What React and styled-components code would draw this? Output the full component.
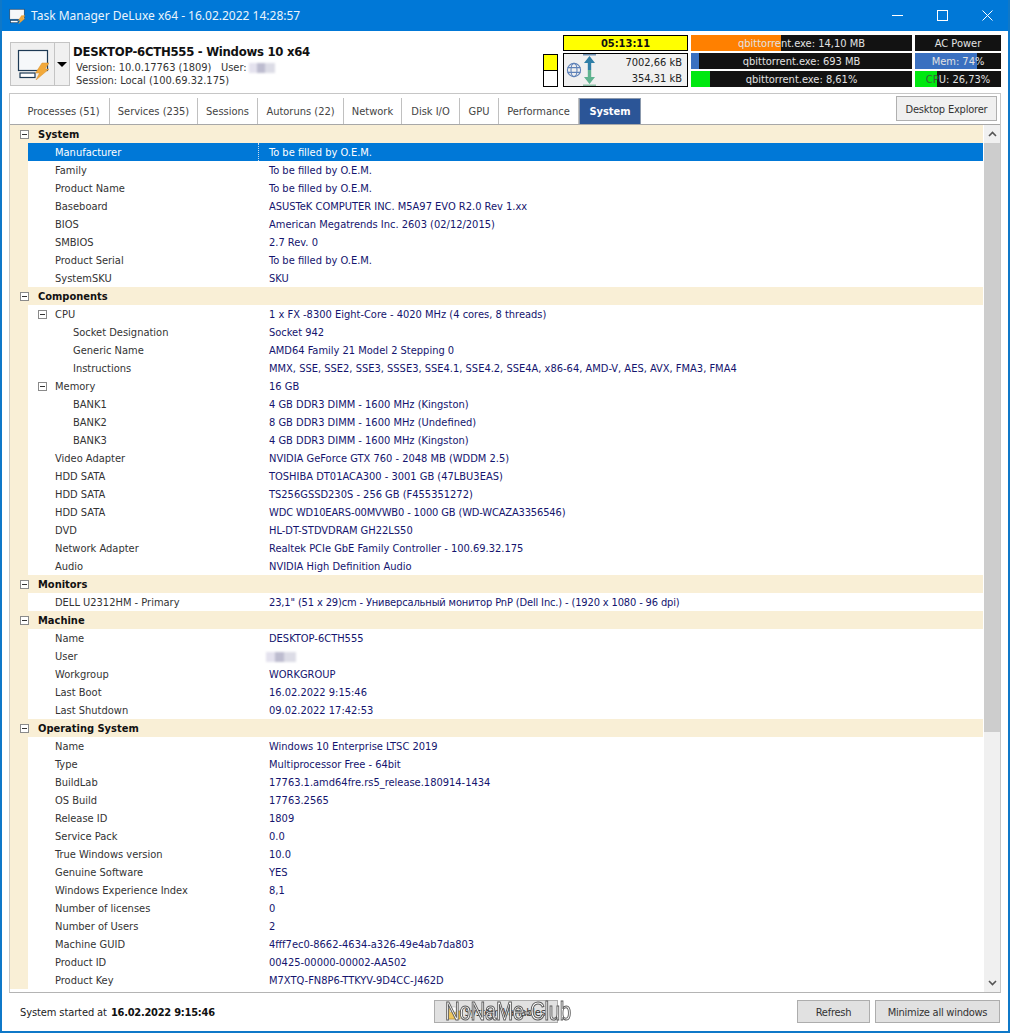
import React from "react";
import styled, { createGlobalStyle } from "styled-components";

const GlobalStyle = createGlobalStyle`
  html, body {
    margin: 0;
    padding: 0;
    background: #fff;
  }
  body {
    font-family: "DejaVu Sans", "Liberation Sans", sans-serif;
    font-stretch: condensed;
    font-size: 11px;
    color: #222;
  }
`;

const Window = styled.div`
  width: 1010px;
  height: 1033px;
  box-sizing: border-box;
  border: 2px solid #0f78c8;
  border-top: none;
  display: flex;
  flex-direction: column;
  overflow: hidden;
  background: #fff;
`;

const TitleBar = styled.div`
  height: 31px;
  margin: 0 -2px;
  flex: none;
  background: #0078d7;
  color: #eaf4fc;
  display: flex;
  align-items: center;
  padding-left: 9px;
`;

const TitleText = styled.span`
  font-family: "Noto Sans", sans-serif;
  font-stretch: normal;
  font-size: 12px;
  margin-left: 6px;
  flex: 1;
`;

const WinButton = styled.div`
  width: 45px;
  height: 31px;
  display: flex;
  align-items: center;
  justify-content: center;
`;

const Header = styled.div`
  height: 62px;
  flex: none;
  display: flex;
  padding: 0 7px 0 8px;
`;

const Machine = styled.div`
  display: flex;
  padding-top: 11px;
  flex: 1;
`;

const MachineButton = styled.div`
  width: 45px;
  height: 44px;
  box-sizing: border-box;
  background: #f0f0f0;
  border: 1px solid #c4c4c4;
  display: flex;
  align-items: center;
  justify-content: center;
`;

const MachineArrow = styled.div`
  width: 15px;
  height: 44px;
  box-sizing: border-box;
  background: #f0f0f0;
  border: 1px solid #c4c4c4;
  border-left: none;
  display: flex;
  align-items: center;
  justify-content: center;
  &::after {
    content: "";
    border-left: 5px solid transparent;
    border-right: 5px solid transparent;
    border-top: 5px solid #000;
  }
`;

const MachineInfo = styled.div`
  margin-left: 3px;
  line-height: 13px;
`;

const MachineName = styled.div`
  font-weight: bold;
  font-size: 13px;
  letter-spacing: -0.28px;
  color: #111;
  line-height: 18px;
  margin-top: 1px;
`;

const MachineLine = styled.div`
  margin-left: 3px;
  color: #333;
  display: flex;
  align-items: center;
`;

const BlurBox = styled.span`
  display: inline-block;
  width: ${(p) => p.$w}px;
  height: 10px;
  margin-left: ${(p) => p.$ml || 0}px;
  filter: blur(1px);
  background: linear-gradient(
    90deg,
    #e4e2ee 0 30%,
    #bdbccf 30% 60%,
    #dcdce6 60% 100%
  );
`;

const Meters = styled.div`
  display: grid;
  grid-template-columns: 20px 128px 224px 86px;
  grid-template-rows: 16px 16px 16px;
  row-gap: 2px;
  padding-top: 4px;
`;

const Clock = styled.div`
  grid-column: 2;
  margin-right: 3px;
  box-sizing: border-box;
  background: #ffff00;
  border: 1px solid #000;
  font-weight: bold;
  text-align: center;
  line-height: 15px;
  color: #111;
`;

const Swatches = styled.div`
  grid-column: 1;
  grid-row: 2 / span 2;
  margin: 1px 5px 0 0;
  border: 1px solid #000;
  display: flex;
  flex-direction: column;
`;

const Swatch = styled.div`
  flex: 1;
  background: ${(p) => p.$color};
  & + & {
    border-top: 1px solid #000;
  }
`;

const NetBox = styled.div`
  grid-column: 2;
  grid-row: 2 / span 2;
  margin-right: 3px;
  box-sizing: border-box;
  background: #f0f0f0;
  border: 1px solid #000;
  display: flex;
  align-items: center;
  padding: 0 5px 0 2px;
`;

const NetValues = styled.div`
  flex: 1;
  text-align: right;
  line-height: 16px;
  padding-top: 1px;
  color: #222;
`;

const Bar = styled.div`
  grid-column: ${(p) => p.$col};
  margin-right: ${(p) => (p.$col === 3 ? 3 : 0)}px;
  height: 16px;
  background: linear-gradient(
    90deg,
    ${(p) => p.$color} 0 ${(p) => p.$fill}px,
    #121212 ${(p) => p.$fill}px
  );
  color: #e2e2e2;
  text-align: center;
  line-height: 18px;
  white-space: nowrap;
`;

const DimText = styled.span`
  color: #3c5a3c;
`;

const Panel = styled.div`
  margin: 0 7px;
  height: 900px;
  flex: none;
  box-sizing: border-box;
  border: 1px solid #c6c6c6;
  border-bottom-color: #b4b4b4;
  display: flex;
  flex-direction: column;
`;

const TabStrip = styled.div`
  height: 31px;
  flex: none;
  box-sizing: border-box;
  border-bottom: 1px solid #a8a8a8;
  display: flex;
  align-items: flex-end;
`;

const Tab = styled.div`
  width: ${(p) => p.$w}px;
  height: 26px;
  box-sizing: border-box;
  padding-left: ${(p) => p.$pl || 0}px;
  display: flex;
  align-items: center;
  justify-content: center;
  color: ${(p) => (p.$active ? "#fff" : "#444")};
  font-weight: ${(p) => (p.$active ? "bold" : "normal")};
  background: ${(p) => (p.$active ? "#2b5597" : "transparent")};
  border-right: 1px solid ${(p) => (p.$active ? "#8b99ad" : "#c0c0c0")};
  border-left: ${(p) => (p.$active ? "1px solid #8b99ad" : "none")};
  border-top: ${(p) => (p.$active ? "1px solid #8b99ad" : "none")};
`;

const ExplorerButton = styled.div`
  margin-left: auto;
  margin-right: 3px;
  margin-bottom: 3px;
  width: 101px;
  height: 25px;
  box-sizing: border-box;
  padding-top: 2px;
  background: #f0f0f0;
  border: 1px solid #b0b0b0;
  display: flex;
  align-items: center;
  justify-content: center;
  color: #333;
  letter-spacing: -0.2px;
`;

const Body = styled.div`
  flex: 1;
  min-height: 0;
  display: flex;
`;

const Tree = styled.div`
  flex: 1;
  min-width: 0;
  padding-right: 1px;
`;

const Row = styled.div`
  height: 18px;
  display: flex;
  align-items: center;
  background: ${(p) => (p.$group ? "#f9efd6" : "transparent")};
`;

const Gutter = styled.div`
  width: 18px;
  height: 18px;
  flex: none;
  background: #f9efd6;
  display: flex;
  align-items: center;
  justify-content: flex-end;
`;

const RowInner = styled.div`
  flex: 1;
  height: 18px;
  display: flex;
  align-items: center;
  background: ${(p) => (p.$selected ? "#0078d7" : "transparent")};
`;

const NameCell = styled.div`
  width: 231px;
  box-sizing: border-box;
  height: 18px;
  padding: 1px 0 0 ${(p) => p.$pad}px;
  display: flex;
  align-items: center;
  color: ${(p) => (p.$selected ? "#fff" : p.$group ? "#111" : "#333")};
  border-right: ${(p) => (p.$selected ? "1px dotted #cde" : "none")};
  font-weight: ${(p) => (p.$group ? "bold" : "normal")};
  white-space: nowrap;
`;

const ValueCell = styled.div`
  height: 18px;
  box-sizing: border-box;
  padding: 1px 0 0 10px;
  color: ${(p) => (p.$selected ? "#fff" : "#14146e")};
  letter-spacing: ${(p) => (p.$tight ? "-0.14px" : "0")};
  white-space: nowrap;
  display: flex;
  align-items: center;
`;

const Expander = styled.span`
  width: 9px;
  height: 9px;
  box-sizing: border-box;
  flex: none;
  border: 1px solid #8a8a8a;
  background: #fff;
  position: relative;
  margin-right: ${(p) => p.$mr || 0}px;
  &::after {
    content: "";
    position: absolute;
    left: 1px;
    right: 1px;
    top: 3px;
    height: 1px;
    background: #333;
  }
`;

const ScrollBar = styled.div`
  width: 16px;
  flex: none;
  background: #f0f0f0;
  display: flex;
  flex-direction: column;
`;

const ScrollArrow = styled.div`
  height: 18px;
  flex: none;
  display: flex;
  align-items: center;
  justify-content: center;
`;

const ScrollThumb = styled.div`
  height: 589px;
  flex: none;
  background: #cdcdcd;
`;

const ScrollTrack = styled.div`
  flex: 1;
`;

const Footer = styled.div`
  flex: 1;
  display: flex;
  align-items: flex-start;
  padding: 7px 0 0 18px;
  position: relative;
`;

const StatusText = styled.div`
  width: 414px;
  flex: none;
  line-height: 25px;
  color: #222;
  letter-spacing: -0.1px;
`;

const StatusDate = styled.b`
  margin-left: 1px;
  color: #111;
  letter-spacing: -0.25px;
`;

const FooterButton = styled.div`
  width: ${(p) => p.$w}px;
  height: 23px;
  box-sizing: border-box;
  padding-top: 2px;
  flex: none;
  margin-left: ${(p) => p.$ml}px;
  background: #e1e1e1;
  border: 1px solid #adadad;
  display: flex;
  align-items: center;
  justify-content: center;
  gap: 3px;
  color: #333;
  letter-spacing: -0.25px;
  white-space: nowrap;
  overflow: hidden;
`;

const Watermark = styled.div`
  position: absolute;
  left: 443px;
  top: 5px;
  font-family: "Liberation Sans", sans-serif;
  font-stretch: normal;
  font-size: 26px;
  line-height: 26px;
  letter-spacing: -0.5px;
  color: #fff;
  -webkit-text-stroke: 1.1px #5a5a5a;
  transform: scaleX(0.79);
  transform-origin: left center;
  white-space: nowrap;
`;

const SYSTEM_ROWS = [
  { group: true, name: "System" },
  { name: "Manufacturer", value: "To be filled by O.E.M.", selected: true },
  { name: "Family", value: "To be filled by O.E.M." },
  { name: "Product Name", value: "To be filled by O.E.M." },
  { name: "Baseboard", value: "ASUSTeK COMPUTER INC. M5A97 EVO R2.0 Rev 1.xx" },
  { name: "BIOS", value: "American Megatrends Inc. 2603 (02/12/2015)" },
  { name: "SMBIOS", value: "2.7 Rev. 0" },
  { name: "Product Serial", value: "To be filled by O.E.M." },
  { name: "SystemSKU", value: "SKU" },
  { group: true, name: "Components" },
  { name: "CPU", open: true, value: "1 x FX -8300 Eight-Core - 4020 MHz (4 cores, 8 threads)" },
  { name: "Socket Designation", sub: true, value: "Socket 942" },
  { name: "Generic Name", sub: true, value: "AMD64 Family 21 Model 2 Stepping 0" },
  { name: "Instructions", sub: true, value: "MMX, SSE, SSE2, SSE3, SSSE3, SSE4.1, SSE4.2, SSE4A, x86-64, AMD-V, AES, AVX, FMA3, FMA4" },
  { name: "Memory", open: true, value: "16 GB" },
  { name: "BANK1", sub: true, value: "4 GB DDR3 DIMM - 1600 MHz (Kingston)" },
  { name: "BANK2", sub: true, value: "8 GB DDR3 DIMM - 1600 MHz (Undefined)" },
  { name: "BANK3", sub: true, value: "4 GB DDR3 DIMM - 1600 MHz (Kingston)" },
  { name: "Video Adapter", value: "NVIDIA GeForce GTX 760 - 2048 MB (WDDM 2.5)" },
  { name: "HDD SATA", value: "TOSHIBA DT01ACA300 - 3001 GB (47LBU3EAS)" },
  { name: "HDD SATA", value: "TS256GSSD230S - 256 GB (F455351272)" },
  { name: "HDD SATA", value: "WDC WD10EARS-00MVWB0 - 1000 GB (WD-WCAZA3356546)", tight: true },
  { name: "DVD", value: "HL-DT-STDVDRAM GH22LS50" },
  { name: "Network Adapter", value: "Realtek PCIe GbE Family Controller - 100.69.32.175" },
  { name: "Audio", value: "NVIDIA High Definition Audio" },
  { group: true, name: "Monitors" },
  { name: "DELL U2312HM - Primary", value: "23,1\" (51 x 29)cm - Универсальный монитор PnP (Dell Inc.) - (1920 x 1080 - 96 dpi)", tight: true },
  { group: true, name: "Machine" },
  { name: "Name", value: "DESKTOP-6CTH555" },
  { name: "User", blurred: true },
  { name: "Workgroup", value: "WORKGROUP" },
  { name: "Last Boot", value: "16.02.2022 9:15:46" },
  { name: "Last Shutdown", value: "09.02.2022 17:42:53" },
  { group: true, name: "Operating System" },
  { name: "Name", value: "Windows 10 Enterprise LTSC 2019" },
  { name: "Type", value: "Multiprocessor Free - 64bit" },
  { name: "BuildLab", value: "17763.1.amd64fre.rs5_release.180914-1434" },
  { name: "OS Build", value: "17763.2565" },
  { name: "Release ID", value: "1809" },
  { name: "Service Pack", value: "0.0" },
  { name: "True Windows version", value: "10.0" },
  { name: "Genuine Software", value: "YES" },
  { name: "Windows Experience Index", value: "8,1" },
  { name: "Number of licenses", value: "0" },
  { name: "Number of Users", value: "2" },
  { name: "Machine GUID", value: "4fff7ec0-8662-4634-a326-49e4ab7da803" },
  { name: "Product ID", value: "00425-00000-00002-AA502" },
  { name: "Product Key", value: "M7XTQ-FN8P6-TTKYV-9D4CC-J462D" },
];

const TABS = [
  { label: "Processes (51)", w: 100, pl: 8 },
  { label: "Services (235)", w: 88 },
  { label: "Sessions", w: 60 },
  { label: "Autoruns (22)", w: 86 },
  { label: "Network", w: 58 },
  { label: "Disk I/O", w: 58 },
  { label: "GPU", w: 39 },
  { label: "Performance", w: 80 },
  { label: "System", w: 62, active: true },
];

const PcIcon = ({ size }) => (
  <svg width={size} height={size} viewBox="0 0 32 32">
    <rect x="1.5" y="2.5" width="29" height="20" fill="#f6f8fa" stroke="#1d3a55" strokeWidth="1.2" />
    <rect x="3" y="25" width="15" height="4.5" fill="#fff" stroke="#1d3a55" strokeWidth="1.2" />
    <path d="M25 15 L32 15 L28 21 L32 21 L19 32 L22.5 25 L18.5 25 Z" fill="#f2a93a" stroke="#d8912c" strokeWidth="0.5" />
  </svg>
);

const NetArrows = () => (
  <svg width="15" height="32" viewBox="0 0 15 32">
    <rect x="1" y="0" width="13" height="1.5" fill="#6f8fb0" />
    <path d="M7.5 2 L13 9 L9.2 9 L9.2 16 L5.8 16 L5.8 9 L2 9 Z" fill="#2f7fa8" />
    <path d="M7.5 30 L13 23 L9.2 23 L9.2 16 L5.8 16 L5.8 23 L2 23 Z" fill="#5fb38f" />
    <rect x="1" y="30.5" width="13" height="1.5" fill="#8fc0a8" />
  </svg>
);

const Globe = () => (
  <svg width="16" height="16" viewBox="0 0 16 16" fill="none" stroke="#5f82b8" strokeWidth="1.1">
    <circle cx="8" cy="8" r="6.6" />
    <ellipse cx="8" cy="8" rx="3" ry="6.6" />
    <path d="M1.6 5.6 H14.4 M1.6 10.4 H14.4" />
  </svg>
);

const FolderIcon = () => (
  <svg width="15" height="14" viewBox="0 0 15 14">
    <path d="M1 3 H6 L7.5 5 H14 V13 H1 Z" fill="#eec65c" stroke="#b08a30" strokeWidth="0.7" />
    <rect x="4" y="1" width="6" height="5" fill="#fff" stroke="#aaa" strokeWidth="0.5" />
  </svg>
);

const ChevronUp = () => (
  <svg width="9" height="6" viewBox="0 0 9 6" fill="none" stroke="#555" strokeWidth="1.6">
    <path d="M1 5 L4.5 1.5 L8 5" />
  </svg>
);

const ChevronDown = () => (
  <svg width="9" height="6" viewBox="0 0 9 6" fill="none" stroke="#555" strokeWidth="1.6">
    <path d="M1 1 L4.5 4.5 L8 1" />
  </svg>
);

const TreeRow = ({ row }) => {
  if (row.group) {
    return (
      <Row $group>
        <Gutter>
          <Expander $mr={-1} />
        </Gutter>
        <RowInner>
          <NameCell $group $pad={10}>
            {row.name}
          </NameCell>
        </RowInner>
      </Row>
    );
  }
  const pad = row.sub ? 45 : row.open ? 10 : 27;
  return (
    <Row>
      <Gutter />
      <RowInner $selected={row.selected}>
        <NameCell $pad={pad} $selected={row.selected}>
          {row.open && <Expander $mr={8} />}
          {row.name}
        </NameCell>
        <ValueCell $selected={row.selected} $tight={row.tight}>
          {row.blurred ? <BlurBox $w={30} $ml={-3} /> : row.value}
        </ValueCell>
      </RowInner>
    </Row>
  );
};

const App = () => {
  return (
    <>
      <GlobalStyle />
      <Window>
        <TitleBar>
          <PcIcon size={16} />
          <TitleText>Task Manager DeLuxe x64 - 16.02.2022 14:28:57</TitleText>
          <WinButton>
            <svg width="11" height="11" viewBox="0 0 11 11" stroke="#fff" fill="none">
              <path d="M0 5.5 H11" />
            </svg>
          </WinButton>
          <WinButton>
            <svg width="11" height="11" viewBox="0 0 11 11" stroke="#fff" fill="none">
              <rect x="0.5" y="0.5" width="10" height="10" />
            </svg>
          </WinButton>
          <WinButton>
            <svg width="11" height="11" viewBox="0 0 11 11" stroke="#fff" fill="none">
              <path d="M0.5 0.5 L10.5 10.5 M10.5 0.5 L0.5 10.5" />
            </svg>
          </WinButton>
        </TitleBar>

        <Header>
          <Machine>
            <MachineButton>
              <PcIcon size={32} />
            </MachineButton>
            <MachineArrow />
            <MachineInfo>
              <MachineName>DESKTOP-6CTH555 - Windows 10 x64</MachineName>
              <MachineLine>
                Version: 10.0.17763 (1809)&nbsp;&nbsp;&nbsp;User:
                <BlurBox $w={26} $ml={2} />
              </MachineLine>
              <MachineLine>Session: Local (100.69.32.175)</MachineLine>
            </MachineInfo>
          </Machine>
          <Meters>
            <Clock>05:13:11</Clock>
            <Bar $col={3} $color="#ff8000" $fill={90}>
              qbittorrent.exe: 14,10 MB
            </Bar>
            <Bar $col={4} $color="#121212" $fill={0}>
              AC Power
            </Bar>
            <Swatches>
              <Swatch $color="#ffff00" />
              <Swatch $color="#fff" />
            </Swatches>
            <NetBox>
              <Globe />
              <NetArrows />
              <NetValues>
                7002,66 kB
                <br />
                354,31 kB
              </NetValues>
            </NetBox>
            <Bar $col={3} $color="#3a70c0" $fill={8}>
              qbittorrent.exe: 693 MB
            </Bar>
            <Bar $col={4} $color="#3a70c0" $fill={62}>
              Mem: 74%
            </Bar>
            <Bar $col={3} $color="#00e810" $fill={19}>
              qbittorrent.exe: 8,61%
            </Bar>
            <Bar $col={4} $color="#00e810" $fill={22}>
              <DimText>CP</DimText>U: 26,73%
            </Bar>
          </Meters>
        </Header>

        <Panel>
          <TabStrip>
            {TABS.map((tab) => (
              <Tab key={tab.label} $w={tab.w} $pl={tab.pl} $active={tab.active}>
                {tab.label}
              </Tab>
            ))}
            <ExplorerButton>Desktop Explorer</ExplorerButton>
          </TabStrip>
          <Body>
            <Tree>
              {SYSTEM_ROWS.map((row, i) => (
                <TreeRow key={i} row={row} />
              ))}
            </Tree>
            <ScrollBar>
              <ScrollArrow>
                <ChevronUp />
              </ScrollArrow>
              <ScrollThumb />
              <ScrollTrack />
              <ScrollArrow>
                <ChevronDown />
              </ScrollArrow>
            </ScrollBar>
          </Body>
        </Panel>

        <Footer>
          <StatusText>
            System started at <StatusDate>16.02.2022 9:15:46</StatusDate>
          </StatusText>
          <FooterButton $w={124} $ml={0}>
            <FolderIcon />
            System Variables
          </FooterButton>
          <FooterButton $w={73} $ml={239}>
            Refresh
          </FooterButton>
          <FooterButton $w={125} $ml={5}>
            Minimize all windows
          </FooterButton>
          <Watermark>NoNaMe-Club</Watermark>
        </Footer>
      </Window>
    </>
  );
};

export default App;
